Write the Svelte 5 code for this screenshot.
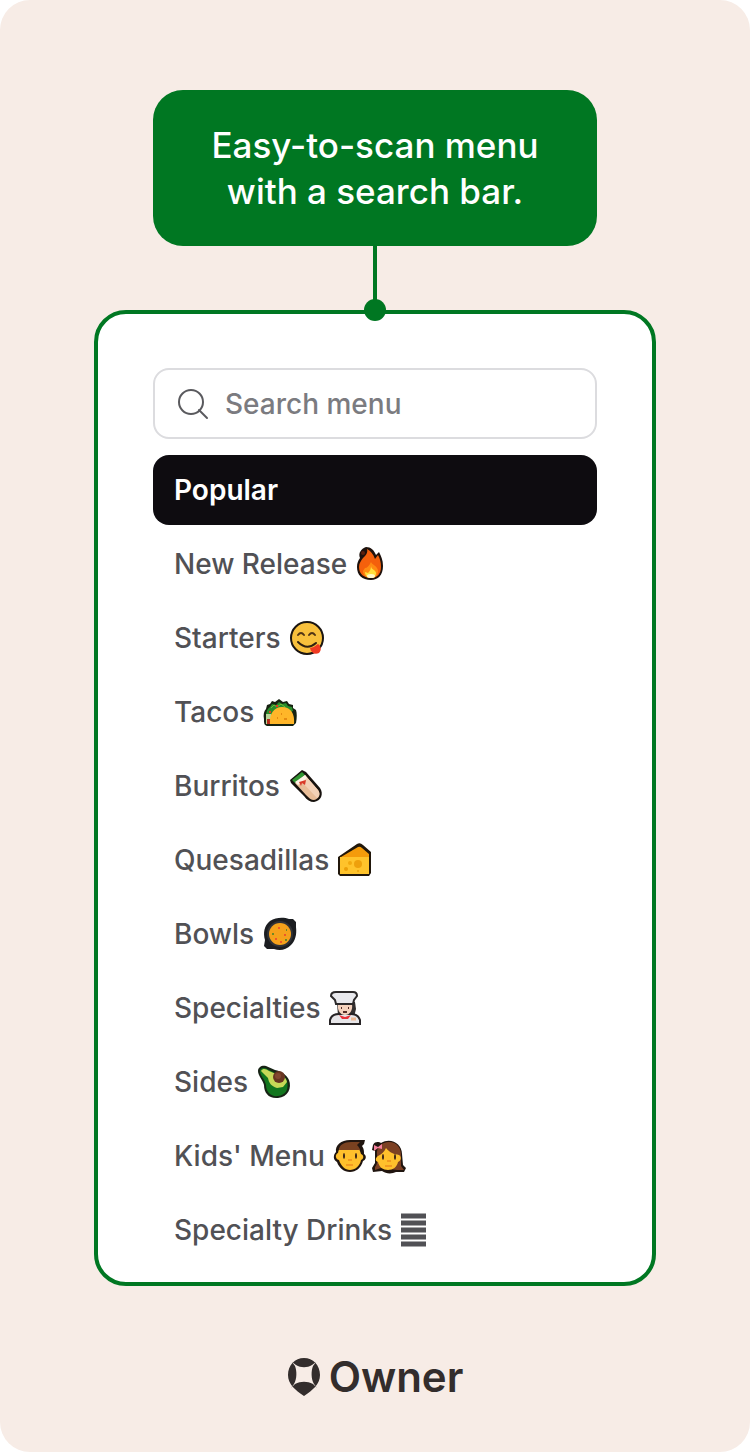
<script>
  let query = $state('');
  let active = $state('Popular');

  const categories = [
    { name: 'Popular', icons: [] },
    { name: 'New Release', icons: ['fire'] },
    { name: 'Starters', icons: ['yum'] },
    { name: 'Tacos', icons: ['taco'] },
    { name: 'Burritos', icons: ['burrito'] },
    { name: 'Quesadillas', icons: ['cheese'] },
    { name: 'Bowls', icons: ['pan'] },
    { name: 'Specialties', icons: ['chef'] },
    { name: 'Sides', icons: ['avocado'] },
    { name: "Kids' Menu", icons: ['boy', 'girl'] },
    { name: 'Specialty Drinks', icons: ['bars'] }
  ];

  const select = (event, name) => {
    event.preventDefault();
    active = name;
  };
</script>

{#snippet emoji(icon)}
  <svg class="emoji" viewBox="0 0 36 36" aria-hidden="true">
    {#if icon === 'fire'}
      <path d="M11 1c5 0 8 3 10 8l3-3c2 4 4 8 4 14 0 9-5 14-12 14C7 34 2 29 2 21c0-4 1-6 3-9-2-5 1-9 6-11z" fill="#1d110c" />
      <path d="M12 3c4 2 6 5 8 10l3-4c2 4 3 7 3 12 0 7-4 11-10 11-7 0-12-4-12-11 0-4 2-6 4-9 3-3 5-5 4-9z" fill="#f4600c" />
      <path d="M10 22c2 0 4-2 6-6 1 3 7 4 7 9s-3 7-7 7c-5 0-8-3-8-7z" fill="#ff8b12" />
      <path d="M16 20c0 4 6 4 5 8-1 3-2 4-5 4-4 0-6-3-6-6l3 1c2-2 3-4 3-7z" fill="#ffdf3c" />
      <ellipse cx="16" cy="30" rx="4" ry="2" fill="#fff9cb" />
      <circle cx="8" cy="7" r="2" fill="#5c200d" />
    {:else if icon === 'yum'}
      <circle cx="18" cy="18" r="16" fill="#f8c03c" stroke="#1b1511" stroke-width="2" />
      <path d="M9 15q3-4 6 0M20 15q3-4 6 0" fill="none" stroke="#513415" stroke-width="2" stroke-linecap="round" />
      <path d="M9 22q9 9 18 1" fill="none" stroke="#30200f" stroke-width="2" stroke-linecap="round" />
      <path d="M21 28q5-1 8-4c3 2 4 6 1 9-4 2-8 0-9-5z" fill="#f03a22" />
    {:else if icon === 'taco'}
      <path d="M2 25c-1-4 0-8 2-10l1-4 3-1 2-3 3 1 4-3 4 3 4-1 2 3 4 1v3l3 2c1 3 1 8 0 13l-3 3H5c-3-1-3-3-3-7z" fill="#162211" />
      <path d="M4 22c0-4 1-7 4-9l2-3 4 1 3-3 3 2 4-1 2 3 4 1 1 4-8 3z" fill="#298c2c" />
      <path d="m9 14 3-3 3 2 4-3 4 3" stroke="#72bd38" fill="none" />
      <path d="M14 12h2M7 18h2" stroke="#e43a22" stroke-width="2" />
      <path d="M4 20h5v10H4z" fill="#b8d596" />
      <path d="M5 25h4v5H5z" fill="#b52a1c" />
      <path d="M8 30c-1-10 4-17 12-17 9 0 13 7 12 17z" fill="#ffb629" />
      <path d="M15 24h1M22 25h3M19 20h1" stroke="#e58b12" stroke-width="2" />
    {:else if icon === 'burrito'}
      <path d="M2 12 14 2l4 2 14 16c4 6 1 13-6 14-4 0-7-2-10-6L3 15z" fill="#17120e" />
      <path d="M7 15 17 7l13 15c3 4 1 9-4 10-3 0-5-2-8-5z" fill="#e9bd98" />
      <path d="M12 12 17 7l13 15c2 3 2 6-1 8z" fill="#f3d1b6" />
      <path d="M4 12 14 4l3 3-10 8z" fill="#319532" />
      <path d="M7 14 17 7l2 3-9 7z" fill="#fff2e5" />
      <path d="M11 14l2 4 1-3 3 2 1-5z" fill="#d93a28" />
    {:else if icon === 'cheese'}
      <path d="M1 15 20 2q3-2 6 1l8 7v21l-2 3H3l-2-2z" fill="#21170b" />
      <path d="M4 15 21 5q2-1 4 1l7 6v3z" fill="#f49b0b" />
      <path d="M3 15h29v17H3z" fill="#ffc32b" />
      <circle cx="21" cy="22" r="4" fill="#eea00c" />
      <circle cx="13" cy="21" r="2" fill="#f2a90f" />
      <circle cx="9" cy="27" r="2" fill="#eca009" />
      <circle cx="21" cy="29" r="1" fill="#eca009" />
    {:else if icon === 'pan'}
      <path d="M8 5c6-4 14-4 19-2h4l3 3v5c1 8-1 14-5 18-5 5-11 6-17 4H5l-3-3 1-6C1 17 2 10 8 5z" fill="#1b1d21" />
      <circle cx="18" cy="18" r="13" fill="#303236" />
      <circle cx="18" cy="18" r="11" fill="#f5a11b" />
      <path d="M16 12h2M13 23h2M22 19h2M18 26h2" stroke="#ed572b" stroke-width="2" />
      <path d="M10 18h2M23 24h2M24 14h1" stroke="#6e8925" stroke-width="2" />
    {:else if icon === 'chef'}
      <path d="M8 12h18l1 7-2 8H9z" fill="#332f2f" />
      <path d="M1 34v-4c1-4 4-6 9-6h12c6 0 8 3 9 6v4z" fill="#e7e6e9" stroke="#272426" stroke-width="2" />
      <path d="M9 14c1-3 3-4 7-4s6 1 7 4c1 6-2 11-7 11s-8-5-7-11z" fill="#f5d2bd" />
      <path d="M2 6c0-3 2-4 5-4h17c3 0 4 1 4 4l-3 4-1 4H7l-1-4z" fill="#e9e9ed" stroke="#2c292a" stroke-width="2" />
      <path d="M12 18h1M19 18h1M14 22h4" stroke="#552d27" stroke-width="2" />
      <path d="m10 25 6 2 6-2-3 4h-6z" fill="#e9323a" />
      <path d="M22 29h5" stroke="#edb995" stroke-width="3" />
    {:else if icon === 'avocado'}
      <path d="M2 7C2 3 6 1 10 2l9 4c6 1 12 5 14 10 3 8-1 17-11 18-9 1-14-5-14-13C7 16 2 12 2 7z" fill="#172315" />
      <path d="M4 7c0-3 4-4 7-2l8 4c6 0 11 4 12 8 2 8-1 14-9 15-7 1-12-4-12-11C9 15 4 12 4 7z" fill="#12761e" />
      <path d="M5 7c2-3 5-2 8 0l7 3c6 0 10 3 11 8l-4 5-6 1c-6-2-8-5-9-10z" fill="#c7d957" />
      <circle cx="23" cy="13" r="6" fill="#683621" />
      <circle cx="22" cy="12" r="3" fill="#814830" />
    {:else if icon === 'boy'}
      <path d="M3 14C2 7 8 2 17 2h15l-1 4-2 2c2 3 2 5 2 8 3 2 2 6-1 7-2 7-7 11-13 11S6 30 4 24c-4-2-4-7-1-10z" fill="#20150f" />
      <path d="M5 15c1-6 4-8 12-8 7 0 10 4 11 9 3 1 3 5 0 6-1 6-6 10-11 10S8 28 6 22c-4-1-4-6-1-7z" fill="#ffc02c" />
      <path d="M6 12C6 7 11 4 18 4h9l-3 3c2 2 3 4 3 5H6z" fill="#794120" />
      <ellipse cx="11" cy="18" rx="1" ry="3" fill="#382015" />
      <ellipse cx="23" cy="18" rx="1" ry="3" fill="#382015" />
      <path d="M15 22h4M13 27h7" stroke="#f29a20" stroke-width="2" />
    {:else if icon === 'girl'}
      <path d="M2 7c2-4 6-3 8-2 10-6 21 1 21 11l1 11 3 3-2 4h-8c-4 2-10 2-14-1l-9 1-1-4 3-5V13L1 12z" fill="#20150f" />
      <path d="M6 17C5 9 11 4 18 4c8 0 12 6 12 13v11l3 4h-7l-16-2-6 2v-3c3-3 2-7 2-12z" fill="#7c4023" />
      <path d="M7 18c4-2 6-4 8-8 4 5 8 6 13 7 3 2 2 6-1 7-1 5-5 8-10 8s-9-3-10-8c-3-1-3-4 0-6z" fill="#ffc02c" />
      <ellipse cx="12" cy="19" rx="1" ry="3" fill="#382015" />
      <ellipse cx="24" cy="19" rx="1" ry="3" fill="#382015" />
      <path d="M16 23h4M14 28h7" stroke="#f29a20" stroke-width="2" />
      <path d="m3 7 4 2 4-3v5l-4-1-4 3z" fill="#f47f9c" />
    {:else}
      <path d="M1 4h25M1 11h25M1 18h25M1 25h25M1 32h25" stroke="#515155" stroke-width="5" />
    {/if}
  </svg>
{/snippet}

<main class="page">
  <h1 class="callout">Easy-to-scan menu<br />with a search bar.</h1>
  <div class="connector"></div>

  <section class="panel">
    <label class="search">
      <svg viewBox="0 0 32 32" aria-hidden="true">
        <circle cx="14" cy="14" r="12" />
        <path d="m22 22 8 8" />
      </svg>
      <input type="search" placeholder="Search menu" aria-label="Search menu" bind:value={query} />
    </label>

    <nav class="menu">
      {#each categories as category}
        <a
          href="#menu"
          class:active={active === category.name}
          onclick={(event) => select(event, category.name)}
        >
          <span>{category.name}</span>
          {#if category.icons.length}
            <span class="icons">
              {#each category.icons as icon}
                {@render emoji(icon)}
              {/each}
            </span>
          {/if}
        </a>
      {/each}
    </nav>
  </section>

  <footer class="brand">
    <svg viewBox="0 0 34 38" aria-hidden="true">
      <path
        fill-rule="evenodd"
        d="M17 0c9 0 16 7 16 17 0 9-7 15-16 21C8 32 1 26 1 17 1 7 8 0 17 0zM5 4l3 4c2 5 2 13-1 18l-3 4 4-4c6-3 12-3 18 0l4 4-3-4c-3-5-3-13-1-18l3-4-4 3c-5 3-11 3-16 0z"
      />
    </svg>
    <span>Owner</span>
  </footer>
</main>

<style>
  :global(body) {
    margin: 0;
    background: #fff;
  }

  .page {
    box-sizing: border-box;
    display: flex;
    flex-direction: column;
    align-items: center;
    min-height: 100vh;
    padding: 90px 24px 52px;
    border-radius: 30px;
    background: #f7ece6;
    font-family: Inter, 'Liberation Sans', sans-serif;
  }

  .callout {
    box-sizing: border-box;
    width: 100%;
    max-width: 444px;
    margin: 0;
    padding: 32px 24px;
    border-radius: 30px;
    background: #007722;
    color: #fff;
    font-size: 35px;
    font-weight: 500;
    line-height: 46px;
    text-align: center;
  }

  .connector {
    position: relative;
    width: 4px;
    height: 64px;
    background: #007722;
  }

  .connector::after {
    content: '';
    position: absolute;
    bottom: -11px;
    left: -9px;
    width: 22px;
    height: 22px;
    border-radius: 50%;
    background: #007722;
  }

  .panel {
    box-sizing: border-box;
    width: 100%;
    max-width: 562px;
    padding: 54px 55px 17px;
    border: 4px solid #007722;
    border-radius: 32px;
    background: #fff;
  }

  .search {
    box-sizing: border-box;
    display: flex;
    align-items: center;
    gap: 16px;
    height: 71px;
    padding: 0 22px;
    border: 2px solid #dcdcdf;
    border-radius: 16px;
  }

  .search svg {
    flex: none;
    width: 32px;
    height: 32px;
    fill: none;
    stroke: #5a5a5e;
    stroke-width: 2;
    stroke-linecap: round;
  }

  .search input {
    flex: 1;
    min-width: 0;
    padding: 0;
    border: 0;
    outline: 0;
    background: none;
    font: 500 28px/36px Inter, 'Liberation Sans', sans-serif;
  }

  .search input::placeholder {
    color: #7b7b80;
    opacity: 1;
  }

  .menu {
    display: flex;
    flex-direction: column;
    gap: 4px;
    margin-top: 16px;
  }

  .menu a {
    display: flex;
    align-items: center;
    gap: 8px;
    height: 70px;
    padding: 0 21px;
    border-radius: 16px;
    color: #515155;
    font-size: 28px;
    font-weight: 500;
    line-height: 36px;
    text-decoration: none;
  }

  .menu a.active {
    background: #0e0c10;
    color: #fff;
    font-weight: 600;
  }

  .icons {
    display: flex;
    gap: 2px;
  }

  .emoji {
    display: block;
    width: 36px;
    height: 36px;
  }

  .brand {
    display: flex;
    align-items: center;
    gap: 8px;
    margin-top: 68px;
    color: #332d2c;
    font-size: 42px;
    font-weight: 600;
    line-height: 46px;
  }

  .brand svg {
    width: 34px;
    height: 38px;
    fill: currentColor;
  }
</style>
